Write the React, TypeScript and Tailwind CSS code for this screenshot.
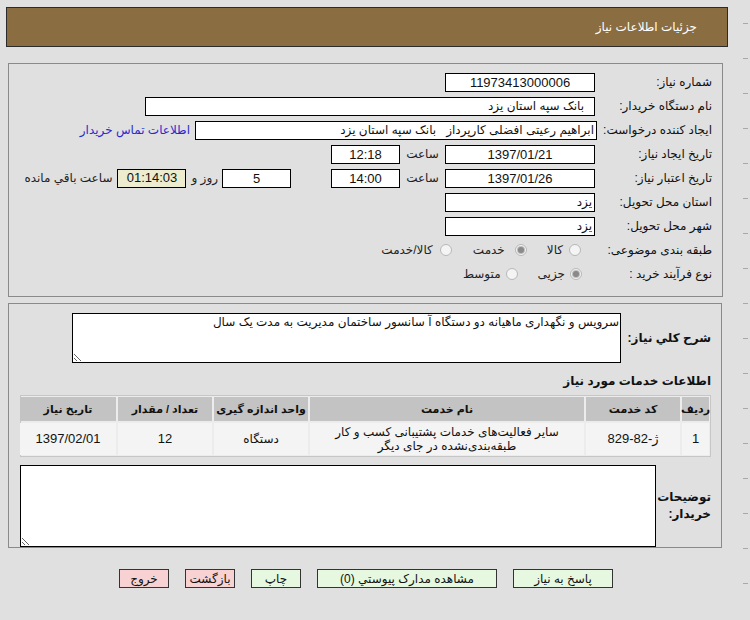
import React from "react";

const font = { fontFamily: '"Liberation Sans", "DejaVu Sans", Tahoma, sans-serif' };

function Box({ className = "", children }: { className?: string; children?: React.ReactNode }) {
  return (
    <div className={`h-[19px] border border-black bg-white flex items-center text-[#111] leading-none ${className}`}>
      {children}
    </div>
  );
}

function Radio({ checked }: { checked?: boolean }) {
  return (
    <span className="w-[12px] h-[12px] rounded-full border border-[#b8b8b8] bg-[#f4f4f4] flex items-center justify-center shrink-0">
      {checked && <span className="w-[6px] h-[6px] rounded-full bg-[#8a8a8a] ring-1 ring-[#bdbdbd]" />}
    </span>
  );
}

function Row({ label, labelW = "w-[117px]", children }: { label: string; labelW?: string; children: React.ReactNode }) {
  return (
    <div className="flex items-center h-[24px]">
      <div className={`${labelW} shrink-0 text-right text-[12px] text-[#111] whitespace-nowrap`}>{label}</div>
      {children}
    </div>
  );
}

const cols = ["ردیف", "کد خدمت", "نام خدمت", "واحد اندازه گیری", "تعداد / مقدار", "تاریخ نیاز"];

export default function App() {
  return (
    <div className="w-[750px] h-[620px] bg-[#e0e0e0] overflow-hidden flex" style={font}>
      <div className="w-[740px] shrink-0 flex flex-col">
        {/* header */}
        <div dir="rtl" className="ml-[6px] mt-[7px] w-[722px] h-[40px] bg-[#8b6d42] border border-[#2b2b2b] flex items-center pr-[30px]">
          <span className="text-white text-[12px]">جزئیات اطلاعات نیاز</span>
        </div>

        {/* main form */}
        <div dir="rtl" className="ml-[8px] mt-[16px] w-[715px] h-[234px] border border-[#8a8a8a] pr-[10px] pt-[6px]">
          <Row label="شماره نیاز:">
            <Box className="w-[150px] justify-center text-[13px]">11973413000006</Box>
          </Row>
          <Row label="نام دستگاه خریدار:">
            <Box className="w-[450px] pr-[10px] text-[12px]">بانک سپه استان یزد</Box>
          </Row>
          <Row label="ایجاد کننده درخواست:" labelW="w-[115px]">
            <Box className="w-[402px] pr-[2px] whitespace-pre text-[12px]">ابراهیم رعیتی افضلی کارپرداز   بانک سپه استان یزد</Box>
            <span className="mr-[5px] text-[12px] text-[#2a2acc] whitespace-nowrap">اطلاعات تماس خریدار</span>
          </Row>
          <Row label="تاریخ ایجاد نیاز:">
            <Box className="w-[150px] justify-center text-[13px]">1397/01/21</Box>
            <span className="w-[45px] text-center text-[12px] text-[#222]">ساعت</span>
            <Box className="w-[69px] justify-center text-[13px]">12:18</Box>
          </Row>
          <Row label="تاریخ اعتبار نیاز:">
            <Box className="w-[150px] justify-center text-[13px]">1397/01/26</Box>
            <span className="w-[45px] text-center text-[12px] text-[#222]">ساعت</span>
            <Box className="w-[69px] justify-center text-[13px]">14:00</Box>
            <Box className="w-[69px] mr-[40px] justify-center text-[13px]">5</Box>
            <span className="mr-[4px] text-[12px] text-[#222] whitespace-nowrap">روز و</span>
            <div className="mr-[5px] w-[69px] h-[19px] border border-black bg-[#eeecce] flex items-center justify-center text-[13px] text-[#111]">
              01:14:03
            </div>
            <span className="mr-[5px] text-[12px] text-[#222] whitespace-nowrap">ساعت باقي مانده</span>
          </Row>
          <Row label="استان محل تحویل:">
            <Box className="w-[150px] pr-[2px] text-[12px]">یزد</Box>
          </Row>
          <Row label="شهر محل تحویل:">
            <Box className="w-[150px] pr-[2px] text-[12px]">یزد</Box>
          </Row>
          <Row label="طبقه بندی موضوعی:">
            <div className="flex items-center text-[12px] text-[#222] mr-[14px]">
              <Radio />
              <span className="mr-[6px]">کالا</span>
              <span className="mr-[20px]"><Radio checked /></span>
              <span className="mr-[10px]">خدمت</span>
              <span className="mr-[21px]"><Radio /></span>
              <span className="mr-[7px]">کالا/خدمت</span>
            </div>
          </Row>
          <Row label="نوع فرآیند خرید :">
            <div className="flex items-center text-[12px] text-[#222] mr-[13px]">
              <Radio checked />
              <span className="mr-[5px]">جزیی</span>
              <span className="mr-[20px]"><Radio /></span>
              <span className="mr-[5px]">متوسط</span>
            </div>
          </Row>
        </div>

        {/* details */}
        <div dir="rtl" className="ml-[8px] mt-[6px] w-[714px] h-[245px] border border-[#8a8a8a] pr-[10px] pt-[9px]">
          <div className="flex items-center">
            <div className="w-[90px] shrink-0 text-right text-[12px] font-bold text-[#111]">شرح کلي نیاز:</div>
            <textarea
              readOnly
              dir="rtl"
              className="w-[549px] h-[50px] border border-black bg-white text-[12px] text-[#111] leading-[15px] p-[1px] resize"
              defaultValue="سرویس و نگهداری ماهیانه دو دستگاه آ سانسور ساختمان مدیریت به مدت یک سال"
            />
          </div>
          <div className="mt-[9px] text-[12px] font-bold text-[#111]">اطلاعات خدمات مورد نیاز</div>
          <div className="mt-[5px] w-[691px] border border-[#c6c6c6] bg-[#ececec] p-[1px] grid grid-cols-[27px_94px_274px_94px_94px_96px] gap-[2px]">
            {cols.map((c) => (
              <div key={c} className="h-[24px] bg-[#c3c3c3] flex items-center justify-center text-[11px] font-bold text-[#111] whitespace-nowrap">
                {c}
              </div>
            ))}
            <div className="h-[32px] bg-[#f4f4f4] flex items-center justify-center text-[13px] text-[#111]">1</div>
            <div className="h-[32px] bg-[#f4f4f4] flex items-center justify-center text-[13px] text-[#111]">ژ-82-829</div>
            <div className="h-[32px] bg-[#f4f4f4] flex items-center justify-center text-center text-[12px] leading-[14px] text-[#111]">
              سایر فعالیت‌های خدمات پشتیبانی کسب و کار
              <br />
              طبقه‌بندی‌نشده در جای دیگر
            </div>
            <div className="h-[32px] bg-[#f4f4f4] flex items-center justify-center text-[12px] text-[#111]">دستگاه</div>
            <div className="h-[32px] bg-[#f4f4f4] flex items-center justify-center text-[13px] text-[#111]">12</div>
            <div className="h-[32px] bg-[#f4f4f4] flex items-center justify-center text-[13px] text-[#111]">1397/02/01</div>
          </div>
          <div className="mt-[8px] flex items-center">
            <div className="w-[55px] shrink-0 text-right text-[12px] font-bold leading-[17px] text-[#111]">
              توضیحات
              <br />
              خریدار:
            </div>
            <textarea readOnly dir="rtl" className="w-[636px] h-[82px] border border-black bg-white resize" />
          </div>
        </div>

        {/* buttons */}
        <div className="mt-[21px] ml-[119px] flex gap-[16px] text-[12px] text-[#111]">
          <div className="w-[50px] h-[19px] border border-[#333] bg-[#f8d2d2] flex items-center justify-center">خروج</div>
          <div className="w-[50px] h-[19px] border border-[#333] bg-[#f8d2d2] flex items-center justify-center">بازگشت</div>
          <div className="w-[50px] h-[19px] border border-[#333] bg-[#e6f8df] flex items-center justify-center">چاپ</div>
          <div dir="rtl" className="w-[180px] h-[19px] border border-[#333] bg-[#e6f8df] flex items-center justify-center">مشاهده مدارک پیوستي (0)</div>
          <div className="w-[100px] h-[19px] border border-[#333] bg-[#e6f8df] flex items-center justify-center">پاسخ به نیاز</div>
        </div>
      </div>

      {/* right edge ticks */}
      <div className="flex-1 flex flex-col items-end pt-[23px] gap-[34px] pr-[2px]">
        {Array.from({ length: 17 }).map((_, i) => (
          <div key={i} className="w-[5px] h-px bg-[#a8a8a8]" />
        ))}
      </div>
    </div>
  );
}
